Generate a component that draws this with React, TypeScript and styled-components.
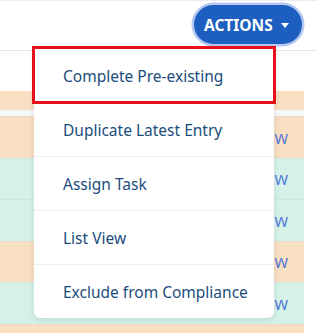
import React from "react"
import styled, {createGlobalStyle} from "styled-components"

const GlobalStyle = createGlobalStyle`
html, body {
  margin: 0;
  padding: 0;
  background: #ffffff;
  font-family: "Noto Sans", "Open Sans", Arial, sans-serif;
}
`

//row colours of the table behind the menu
const rowColors: Record<string, string> = {
  pending: "#f8dfc2",
  done: "#d4f2e7",
}

interface RowData {
  status: string;
  height: number;
  link?: boolean;
}

const rows: RowData[] = [
  {status: "pending", height: 42, link: true},
  {status: "done", height: 41, link: true},
  {status: "done", height: 42, link: true},
  {status: "pending", height: 41, link: true},
  {status: "done", height: 42, link: true},
  {status: "pending", height: 41},
]

const menuItems = [
  "Complete Pre-existing",
  "Duplicate Latest Entry",
  "Assign Task",
  "List View",
  "Exclude from Compliance",
]

const Page = styled.div`
position: relative;
width: 317px;
height: 333px;
overflow: hidden;
border-top: 1px solid #ececf2;
box-sizing: border-box;
`

const Header = styled.div`
height: 50px;
display: flex;
justify-content: flex-end;
align-items: flex-start;
padding: 4px 15px 0 0;
box-sizing: border-box;
border-bottom: 1px solid #e3e4ec;
`

const ActionsButton = styled.button`
display: flex;
align-items: center;
gap: 8px;
height: 39px;
width: 108px;
padding: 0 0 0 10px;
border: none;
border-radius: 20px;
background: #1c5fc0;
color: #ffffff;
font-family: "Noto Sans", "Open Sans", Arial, sans-serif;
font-weight: 700;
font-size: 15.5px;
box-shadow: 0 0 0 2.5px rgba(120, 155, 230, 0.55);
`

const Caret = styled.span`
width: 0;
height: 0;
border-left: 4.5px solid transparent;
border-right: 4.5px solid transparent;
border-top: 5px solid #ffffff;
margin-top: 1px;
`

const Table = styled.div`
margin-top: 40px;
width: 304px;
display: flex;
flex-direction: column;
`

const PartialRow = styled.div`
height: 19px;
background: ${rowColors.pending};
border-bottom: 6px solid #f6f7fb;
`

const Row = styled.div<{$status: string; $h: number}>`
height: ${props => props.$h}px;
background: ${props => rowColors[props.$status]};
display: flex;
align-items: center;
justify-content: flex-end;
padding-right: 16px;
box-sizing: border-box;
border-top: 1px solid rgba(200, 210, 225, 0.35);
`

const ViewLink = styled.span`
color: #4f72de;
font-size: 14.5px;
`

const Menu = styled.div`
position: absolute;
top: 47px;
left: 34px;
width: 240px;
background: #ffffff;
border-radius: 0 0 6px 6px;
box-shadow: 0 2px 6px rgba(40, 50, 80, 0.12);
display: flex;
flex-direction: column;
`

const MenuItem = styled.div<{$focused?: boolean}>`
position: relative;
z-index: ${props => props.$focused ? 1 : 0};
height: 54px;
display: flex;
align-items: center;
padding-left: 29px;
box-sizing: border-box;
color: #1b4d7c;
font-size: 15.5px;
border-top: 1px solid ${props => props.$focused ? "transparent" : "#ececf3"};
outline: ${props => props.$focused ? "3px solid #e8101a" : "none"};
outline-offset: -1px;
`

const App = () => {
  return (
    <>
      <GlobalStyle />
      <Page>
        <Header>
          <ActionsButton>
            ACTIONS
            <Caret />
          </ActionsButton>
        </Header>
        <Table>
          <PartialRow />
          {rows.map((row, i) => (
            <Row key={i} $status={row.status} $h={row.height}>
              {row.link && <ViewLink>VIEW</ViewLink>}
            </Row>
          ))}
        </Table>
        <Menu>
          {menuItems.map((item, i) => (
            <MenuItem key={item} $focused={i === 0}>{item}</MenuItem>
          ))}
        </Menu>
      </Page>
    </>
  )
}

export default App
